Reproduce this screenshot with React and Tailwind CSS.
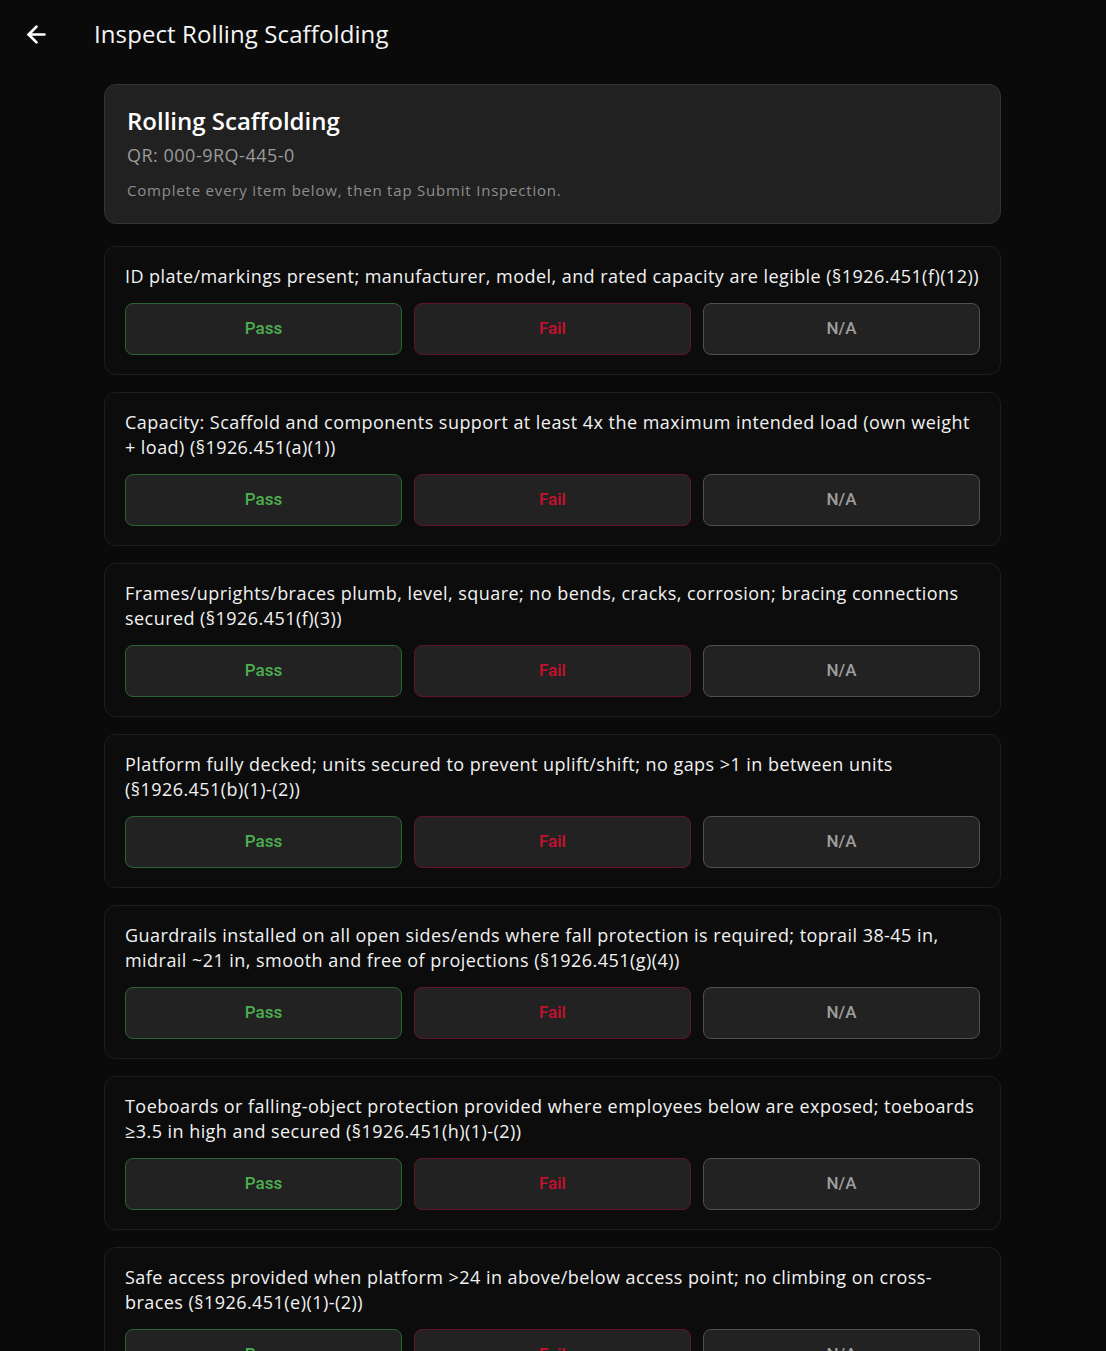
import { ArrowLeft } from "lucide-react";

const items = [
  "ID plate/markings present; manufacturer, model, and rated capacity are legible (§1926.451(f)(12))",
  "Capacity: Scaffold and components support at least 4x the maximum intended load (own weight + load) (§1926.451(a)(1))",
  "Frames/uprights/braces plumb, level, square; no bends, cracks, corrosion; bracing connections secured (§1926.451(f)(3))",
  "Platform fully decked; units secured to prevent uplift/shift; no gaps >1 in between units (§1926.451(b)(1)-(2))",
  "Guardrails installed on all open sides/ends where fall protection is required; toprail 38-45 in, midrail ~21 in, smooth and free of projections (§1926.451(g)(4))",
  "Toeboards or falling-object protection provided where employees below are exposed; toeboards ≥3.5 in high and secured (§1926.451(h)(1)-(2))",
  "Safe access provided when platform >24 in above/below access point; no climbing on cross-braces (§1926.451(e)(1)-(2))",
];

function ChecklistItem({ text }) {
  return (
    <div className="rounded-xl border border-[#1e1e1e] bg-[#0c0c0c] px-5 pt-[17px] pb-[19px]">
      <p className="text-[18px] leading-[25px] tracking-[0.45px] text-[#f2f2f2] mb-[14px]">{text}</p>
      <div className="grid grid-cols-3 gap-3 font-['Roboto',sans-serif] font-medium text-[17px]">
        <button className="h-[52px] rounded-lg border border-[#2c6331] bg-[#222222] text-[#4caf50]">Pass</button>
        <button className="h-[52px] rounded-lg border border-[#611626] bg-[#222222] text-[#c8102e]">Fail</button>
        <button className="h-[52px] rounded-lg border border-[#505050] bg-[#222222] text-[#9e9e9e]">N/A</button>
      </div>
    </div>
  );
}

export default function App() {
  return (
    <div className="min-h-screen bg-[#0a0a0a] text-white font-['Open_Sans',sans-serif]">
      {/* Top bar */}
      <div className="h-[68px] flex items-center">
        <button className="w-[72px] h-full flex items-center justify-center">
          <ArrowLeft className="w-[27px] h-[27px] text-white" strokeWidth={2.4} />
        </button>
        <h1 className="ml-[22px] text-[24px] tracking-[0.1px] text-[#f5f5f5]">Inspect Rolling Scaffolding</h1>
      </div>

      <div className="w-[897px] ml-[104px] pt-4 pb-10">
        <div className="rounded-xl border border-[#333333] bg-[#212121] px-[22px] pt-[20px] pb-[21px]">
          <h2 className="text-[24px] font-semibold text-white leading-8">Rolling Scaffolding</h2>
          <p className="mt-[6px] text-[18px] leading-6 tracking-[0.5px] text-[#9a9a9a]">QR: 000-9RQ-445-0</p>
          <p className="mt-[11px] text-[15px] leading-6 text-[#8e8e8e] tracking-[0.8px]">Complete every item below, then tap Submit Inspection.</p>
        </div>

        <div className="mt-[22px] flex flex-col gap-[17px]">
          {items.map((t) => (
            <ChecklistItem key={t} text={t} />
          ))}
        </div>
      </div>
    </div>
  );
}
